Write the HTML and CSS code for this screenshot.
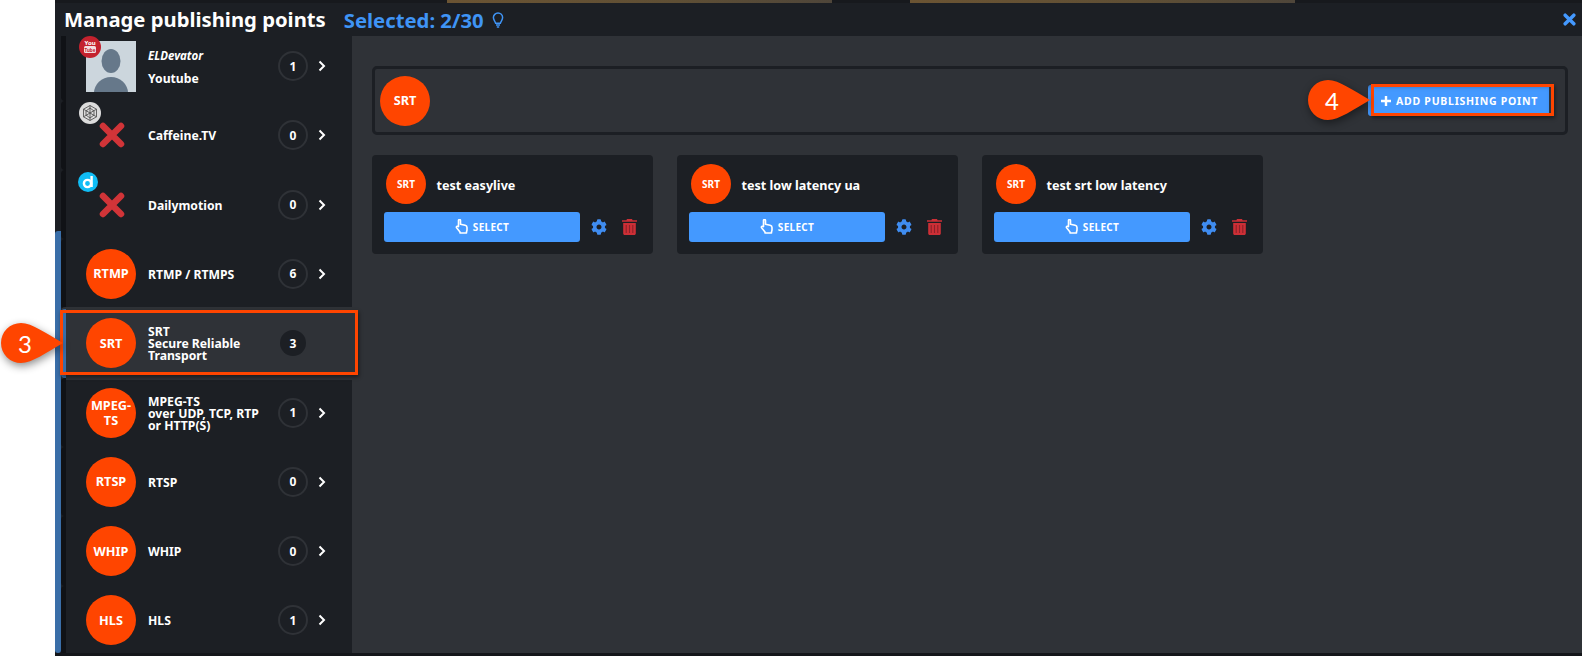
FILE: index.html
```html
<!DOCTYPE html>
<html lang="en">
<head>
<meta charset="utf-8">
<title>Manage publishing points</title>
<link rel="stylesheet" href="styles.css">
</head>
<body>
<div class="app">
  <header class="header">
    <div class="strip"><span class="strip-seg"></span><span class="strip-seg"></span></div>
    <div class="titlebar">
      <h1 class="title">Manage publishing points</h1>
      <span class="selected">Selected: 2/30</span>
      <svg class="bulb" viewBox="0 0 12 16"><path d="M6 1a4.6 4.6 0 0 0-4.6 4.6c0 2.3 1.7 3.4 2.2 5.6h4.8c.5-2.2 2.2-3.3 2.2-5.6A4.6 4.6 0 0 0 6 1z" fill="none" stroke="#3f94f5" stroke-width="1.5"/><path d="M4 13h4M4.8 15h2.4" stroke="#3f94f5" stroke-width="1.5" fill="none"/></svg>
      <svg class="close" viewBox="0 0 12 12"><path d="M2 2l8 8M10 2l-8 8" stroke="#4499ff" stroke-width="3.2" stroke-linecap="round"/></svg>
    </div>
  </header>
  <div class="body">
    <div class="rail"><div class="rail-blue"></div></div>
    <aside class="sidebar">
      <div class="list">
        <div class="row">
          <div class="icon">
            <svg class="avatar" viewBox="0 0 50 51"><rect width="50" height="51" fill="#ccd6dd"/><ellipse cx="25" cy="20" rx="9.5" ry="12" fill="#66788a"/><ellipse cx="25" cy="52" rx="17" ry="16" fill="#66788a"/></svg>
            <svg class="badge badge-yt" viewBox="0 0 22 22"><circle cx="11" cy="11" r="11" fill="#c4222e"/><text class="yt-you" x="11" y="8.5" text-anchor="middle">You</text><rect x="5" y="10" width="12" height="7" rx="1.5" fill="#f3dfe0"/><text class="yt-tube" x="11" y="15.5" text-anchor="middle">Tube</text></svg>
          </div>
          <div class="label"><div class="account">ELDevator</div><div>Youtube</div></div>
          <span class="count">1</span>
          <svg class="chev" viewBox="0 0 8 12"><path d="M1.5 1.5L6 6l-4.5 4.5" fill="none" stroke="#fff" stroke-width="2"/></svg>
        </div>
        <div class="row">
          <div class="icon">
            <svg class="badge" viewBox="0 0 22 22"><circle cx="11" cy="11" r="11" fill="#dcdcdc"/><path d="M11 3.5l6.5 3.7v7.6L11 18.5l-6.5-3.7V7.2zM11 3.5v15M4.5 7.2l13 7.6M17.5 7.2l-13 7.6M7 9l4-3 4 3 0 4-4 3-4-3z" fill="none" stroke="#444" stroke-width=".8"/></svg>
            <svg class="cross" viewBox="0 0 26 26"><path d="M4 4l18 18M22 4L4 22" stroke="#d13438" stroke-width="6.5" stroke-linecap="round"/></svg>
          </div>
          <div class="label">Caffeine.TV</div>
          <span class="count">0</span>
          <svg class="chev" viewBox="0 0 8 12"><path d="M1.5 1.5L6 6l-4.5 4.5" fill="none" stroke="#fff" stroke-width="2"/></svg>
        </div>
        <div class="row">
          <div class="icon">
            <svg class="badge badge-d" viewBox="0 0 20 20"><circle cx="10" cy="10" r="10" fill="#10bdf5"/><circle cx="9.5" cy="11.5" r="3.6" fill="none" stroke="#fff" stroke-width="2.4"/><path d="M13.6 4v11" stroke="#fff" stroke-width="2.4"/></svg>
            <svg class="cross" viewBox="0 0 26 26"><path d="M4 4l18 18M22 4L4 22" stroke="#d13438" stroke-width="6.5" stroke-linecap="round"/></svg>
          </div>
          <div class="label">Dailymotion</div>
          <span class="count">0</span>
          <svg class="chev" viewBox="0 0 8 12"><path d="M1.5 1.5L6 6l-4.5 4.5" fill="none" stroke="#fff" stroke-width="2"/></svg>
        </div>
        <div class="row">
          <div class="circle">RTMP</div>
          <div class="label">RTMP / RTMPS</div>
          <span class="count">6</span>
          <svg class="chev" viewBox="0 0 8 12"><path d="M1.5 1.5L6 6l-4.5 4.5" fill="none" stroke="#fff" stroke-width="2"/></svg>
        </div>
        <div class="row row-active">
          <div class="circle">SRT</div>
          <div class="label">SRT<br>Secure Reliable<br>Transport</div>
          <span class="count count-active">3</span>
        </div>
        <div class="row">
          <div class="circle">MPEG-TS</div>
          <div class="label">MPEG-TS<br>over UDP, TCP, RTP<br>or HTTP(S)</div>
          <span class="count">1</span>
          <svg class="chev" viewBox="0 0 8 12"><path d="M1.5 1.5L6 6l-4.5 4.5" fill="none" stroke="#fff" stroke-width="2"/></svg>
        </div>
        <div class="row">
          <div class="circle">RTSP</div>
          <div class="label">RTSP</div>
          <span class="count">0</span>
          <svg class="chev" viewBox="0 0 8 12"><path d="M1.5 1.5L6 6l-4.5 4.5" fill="none" stroke="#fff" stroke-width="2"/></svg>
        </div>
        <div class="row">
          <div class="circle">WHIP</div>
          <div class="label">WHIP</div>
          <span class="count">0</span>
          <svg class="chev" viewBox="0 0 8 12"><path d="M1.5 1.5L6 6l-4.5 4.5" fill="none" stroke="#fff" stroke-width="2"/></svg>
        </div>
        <div class="row">
          <div class="circle">HLS</div>
          <div class="label">HLS</div>
          <span class="count">1</span>
          <svg class="chev" viewBox="0 0 8 12"><path d="M1.5 1.5L6 6l-4.5 4.5" fill="none" stroke="#fff" stroke-width="2"/></svg>
        </div>
      </div>
    </aside>
    <main class="main">
      <section class="head-box">
        <div class="circle">SRT</div>
        <button class="add-btn"><svg class="plus" viewBox="0 0 10 10"><path d="M5 0v10M0 5h10" stroke="#fff" stroke-width="2.4"/></svg>ADD PUBLISHING POINT</button>
      </section>
      <section class="cards">
        <article class="card">
          <div class="card-top"><div class="circle circle-sm">SRT</div><div class="card-name">test easylive</div></div>
          <div class="card-actions">
            <button class="select-btn"><svg class="hand" viewBox="0 0 13 15"><path d="M3.5 1.6c0-1.3 2-1.3 2 0v3.6l4.6 1c1.2.3 1.9 1.2 1.9 2.4v2.2c0 .8-.2 1.4-.5 2v1.2H5v-1L1.6 8.8c-.8-1 .6-2.2 1.9-1.2z" fill="none" stroke="#fff" stroke-width="1.6" stroke-linejoin="round"/></svg>SELECT</button>
            <svg class="gear" viewBox="0 0 512 512"><path fill="#3f8cf0" d="M487.4 315.7l-42.6-24.6c4.3-23.2 4.3-47 0-70.2l42.6-24.6c4.9-2.8 7.1-8.6 5.5-14-11.1-35.6-30-67.8-54.7-94.6-3.8-4.1-10-5.1-14.8-2.3L380.8 110c-17.9-15.4-38.5-27.3-60.8-35.1V25.8c0-5.6-3.9-10.5-9.4-11.7-36.7-8.2-74.3-7.8-109.2 0-5.5 1.2-9.4 6.1-9.4 11.7V75c-22.2 7.9-42.8 19.8-60.8 35.1L88.7 85.5c-4.9-2.8-11-1.9-14.8 2.3-24.7 26.7-43.6 58.9-54.7 94.6-1.7 5.4.6 11.2 5.5 14L67.3 221c-4.3 23.2-4.3 47 0 70.2l-42.6 24.6c-4.9 2.8-7.1 8.6-5.5 14 11.1 35.6 30 67.8 54.7 94.6 3.8 4.1 10 5.1 14.8 2.3l42.6-24.6c17.9 15.4 38.5 27.3 60.8 35.1v49.2c0 5.6 3.9 10.5 9.4 11.7 36.7 8.2 74.3 7.8 109.2 0 5.5-1.2 9.4-6.1 9.4-11.7v-49.2c22.2-7.9 42.8-19.8 60.8-35.1l42.6 24.6c4.9 2.8 11 1.9 14.8-2.3 24.7-26.7 43.6-58.9 54.7-94.6 1.5-5.5-.7-11.3-5.6-14.1zM256 336c-44.1 0-80-35.9-80-80s35.9-80 80-80 80 35.9 80 80-35.9 80-80 80z"/></svg>
            <svg class="trash" viewBox="0 0 15 16"><path fill="#cc2f36" d="M5 0h5l.6 1.2H15v1.6H0V1.2h4.4zM1.2 4h12.6v10.5c0 .8-.7 1.5-1.5 1.5H2.7c-.8 0-1.5-.7-1.5-1.5z"/><path d="M4.2 6v8M7.5 6v8M10.8 6v8" stroke="#8c2229" stroke-width="1.1"/></svg>
          </div>
        </article>
        <article class="card">
          <div class="card-top"><div class="circle circle-sm">SRT</div><div class="card-name">test low latency ua</div></div>
          <div class="card-actions">
            <button class="select-btn"><svg class="hand" viewBox="0 0 13 15"><path d="M3.5 1.6c0-1.3 2-1.3 2 0v3.6l4.6 1c1.2.3 1.9 1.2 1.9 2.4v2.2c0 .8-.2 1.4-.5 2v1.2H5v-1L1.6 8.8c-.8-1 .6-2.2 1.9-1.2z" fill="none" stroke="#fff" stroke-width="1.6" stroke-linejoin="round"/></svg>SELECT</button>
            <svg class="gear" viewBox="0 0 512 512"><path fill="#3f8cf0" d="M487.4 315.7l-42.6-24.6c4.3-23.2 4.3-47 0-70.2l42.6-24.6c4.9-2.8 7.1-8.6 5.5-14-11.1-35.6-30-67.8-54.7-94.6-3.8-4.1-10-5.1-14.8-2.3L380.8 110c-17.9-15.4-38.5-27.3-60.8-35.1V25.8c0-5.6-3.9-10.5-9.4-11.7-36.7-8.2-74.3-7.8-109.2 0-5.5 1.2-9.4 6.1-9.4 11.7V75c-22.2 7.9-42.8 19.8-60.8 35.1L88.7 85.5c-4.9-2.8-11-1.9-14.8 2.3-24.7 26.7-43.6 58.9-54.7 94.6-1.7 5.4.6 11.2 5.5 14L67.3 221c-4.3 23.2-4.3 47 0 70.2l-42.6 24.6c-4.9 2.8-7.1 8.6-5.5 14 11.1 35.6 30 67.8 54.7 94.6 3.8 4.1 10 5.1 14.8 2.3l42.6-24.6c17.9 15.4 38.5 27.3 60.8 35.1v49.2c0 5.6 3.9 10.5 9.4 11.7 36.7 8.2 74.3 7.8 109.2 0 5.5-1.2 9.4-6.1 9.4-11.7v-49.2c22.2-7.9 42.8-19.8 60.8-35.1l42.6 24.6c4.9 2.8 11 1.9 14.8-2.3 24.7-26.7 43.6-58.9 54.7-94.6 1.5-5.5-.7-11.3-5.6-14.1zM256 336c-44.1 0-80-35.9-80-80s35.9-80 80-80 80 35.9 80 80-35.9 80-80 80z"/></svg>
            <svg class="trash" viewBox="0 0 15 16"><path fill="#cc2f36" d="M5 0h5l.6 1.2H15v1.6H0V1.2h4.4zM1.2 4h12.6v10.5c0 .8-.7 1.5-1.5 1.5H2.7c-.8 0-1.5-.7-1.5-1.5z"/><path d="M4.2 6v8M7.5 6v8M10.8 6v8" stroke="#8c2229" stroke-width="1.1"/></svg>
          </div>
        </article>
        <article class="card">
          <div class="card-top"><div class="circle circle-sm">SRT</div><div class="card-name">test srt low latency</div></div>
          <div class="card-actions">
            <button class="select-btn"><svg class="hand" viewBox="0 0 13 15"><path d="M3.5 1.6c0-1.3 2-1.3 2 0v3.6l4.6 1c1.2.3 1.9 1.2 1.9 2.4v2.2c0 .8-.2 1.4-.5 2v1.2H5v-1L1.6 8.8c-.8-1 .6-2.2 1.9-1.2z" fill="none" stroke="#fff" stroke-width="1.6" stroke-linejoin="round"/></svg>SELECT</button>
            <svg class="gear" viewBox="0 0 512 512"><path fill="#3f8cf0" d="M487.4 315.7l-42.6-24.6c4.3-23.2 4.3-47 0-70.2l42.6-24.6c4.9-2.8 7.1-8.6 5.5-14-11.1-35.6-30-67.8-54.7-94.6-3.8-4.1-10-5.1-14.8-2.3L380.8 110c-17.9-15.4-38.5-27.3-60.8-35.1V25.8c0-5.6-3.9-10.5-9.4-11.7-36.7-8.2-74.3-7.8-109.2 0-5.5 1.2-9.4 6.1-9.4 11.7V75c-22.2 7.9-42.8 19.8-60.8 35.1L88.7 85.5c-4.9-2.8-11-1.9-14.8 2.3-24.7 26.7-43.6 58.9-54.7 94.6-1.7 5.4.6 11.2 5.5 14L67.3 221c-4.3 23.2-4.3 47 0 70.2l-42.6 24.6c-4.9 2.8-7.1 8.6-5.5 14 11.1 35.6 30 67.8 54.7 94.6 3.8 4.1 10 5.1 14.8 2.3l42.6-24.6c17.9 15.4 38.5 27.3 60.8 35.1v49.2c0 5.6 3.9 10.5 9.4 11.7 36.7 8.2 74.3 7.8 109.2 0 5.5-1.2 9.4-6.1 9.4-11.7v-49.2c22.2-7.9 42.8-19.8 60.8-35.1l42.6 24.6c4.9 2.8 11 1.9 14.8-2.3 24.7-26.7 43.6-58.9 54.7-94.6 1.5-5.5-.7-11.3-5.6-14.1zM256 336c-44.1 0-80-35.9-80-80s35.9-80 80-80 80 35.9 80 80-35.9 80-80 80z"/></svg>
            <svg class="trash" viewBox="0 0 15 16"><path fill="#cc2f36" d="M5 0h5l.6 1.2H15v1.6H0V1.2h4.4zM1.2 4h12.6v10.5c0 .8-.7 1.5-1.5 1.5H2.7c-.8 0-1.5-.7-1.5-1.5z"/><path d="M4.2 6v8M7.5 6v8M10.8 6v8" stroke="#8c2229" stroke-width="1.1"/></svg>
          </div>
        </article>
      </section>
    </main>
  </div>
  <div class="footer"></div>
</div>

<div class="note-rect note-rect-row"></div>
<div class="note-rect note-rect-btn"></div>
<div class="balloon balloon-3">
  <svg class="balloon-shape" viewBox="0 0 64 42"><path fill="#ff4500" d="M21 1c11 0 26 11 42 20C47 30 32 41 21 41A20 20 0 0 1 21 1z"/></svg>
  <span class="balloon-num">3</span>
</div>
<div class="balloon balloon-4">
  <svg class="balloon-shape" viewBox="0 0 64 42"><path fill="#ff4500" d="M21 1c11 0 26 11 42 20C47 30 32 41 21 41A20 20 0 0 1 21 1z"/></svg>
  <span class="balloon-num">4</span>
</div>
</body>
</html>
```

FILE: styles.css
```css
* { box-sizing: border-box; }
html, body { margin: 0; padding: 0; height: 656px; overflow: hidden; background: #fff; }
body { font-family: "Noto Sans", "Open Sans", sans-serif; color: #fff; position: relative; }

.app { margin-left: 55px; height: 656px; display: flex; flex-direction: column; background: #1c1f24; }

.header { height: 36px; flex: none; background: #1c1f24; }
.strip { height: 3px; background: #17191d; display: flex; gap: 78px; padding-left: 392px; }
.strip-seg { width: 385px; background: linear-gradient(90deg, #6b5433, #5f4f35 60%, #4f463a); }
.titlebar { height: 33px; display: flex; align-items: center; padding: 0 6px 0 9px; }
.title { margin: 0; font-size: 20.25px; font-weight: 700; line-height: 33px; color: #fff; }
.selected { margin-left: 18px; font-size: 20.3px; font-weight: 700; color: #3f94f5; }
.bulb { width: 12px; height: 16px; margin-left: 8px; }
.close { width: 13px; height: 13px; margin-left: auto; }

.body { flex: 1; display: flex; min-height: 0; }
.rail { width: 6px; flex: none; padding-top: 195px; display: flex; }
.rail-blue { flex: 1; background: #3a6ea8; border-radius: 4px 0 4px 4px; }
.sidebar { width: 291px; flex: none; overflow: hidden; }
.list { margin-top: -4.6px; }

.row { height: 69.3px; display: flex; align-items: center; padding-left: 20px; border-left: 5px solid #101216; border-radius: 4px 0 0 4px; }
.row-active { background: #2f3237; border-left-color: #3a6ea8; box-shadow: 0 -2px 0 #2f3237, 0 2px 0 #2f3237; }

.icon { width: 50px; height: 50px; flex: none; position: relative; }
.avatar { width: 50px; height: 51px; display: block; }
.badge { position: absolute; left: -7px; top: -8px; width: 22px; height: 22px; }
.badge-yt { top: -5px; }
.badge-d { width: 20px; height: 20px; left: -8px; }
.cross { position: absolute; left: 13px; top: 12px; width: 26px; height: 26px; }
.yt-you { font-size: 6px; font-weight: 700; fill: #fff; }
.yt-tube { font-size: 4.5px; font-weight: 700; fill: #c4222e; }

.circle { width: 50px; height: 50px; flex: none; border-radius: 50%; background: #ff4500; color: #fff; display: flex; align-items: center; justify-content: center; text-align: center; font-size: 12.7px; font-weight: 700; line-height: 15px; padding: 0 2px; }
.circle-sm { width: 40px; height: 40px; font-size: 10px; }

.label { width: 130px; flex: none; margin-left: 12px; padding: 2px 4px 0 0; font-size: 12.2px; font-weight: 700; line-height: 12px; }
.account { font-size: 11.5px; font-style: italic; margin-bottom: 11px; }
.count { width: 30px; height: 30px; flex: none; border-radius: 50%; border: 2px solid #2f3237; display: flex; align-items: center; justify-content: center; font-size: 12px; font-weight: 700; }
.count-active { width: 26px; height: 26px; margin-left: 2px; background: #1c1f24; border: 0; }
.chev { width: 8px; height: 12px; flex: none; margin-left: 10px; }

.main { flex: 1; min-width: 0; background: #2f3237; padding: 30px 14px 0 20px; }
.head-box { height: 69px; border: 3px solid #1c1f24; border-radius: 5px; display: flex; align-items: center; justify-content: space-between; padding: 0 16px 0 5px; }
.add-btn { width: 181px; height: 31px; border: 0; padding: 0 0 0 13px; background: #4499ff; border-radius: 3px 0 0 3px; color: #fff; font-family: inherit; font-size: 10.5px; font-weight: 700; letter-spacing: .75px; display: flex; align-items: center; gap: 5px; white-space: nowrap; box-shadow: 2px 0 0 #2a3340, inset 0 4px 4px -2px rgba(0,0,0,.25); }
.plus { width: 10px; height: 10px; flex: none; }

.cards { display: flex; gap: 24px; margin-top: 20px; }
.card { width: 281px; height: 99px; background: #1c1f24; border-radius: 4px; padding: 9px 12px; }
.card-top { display: flex; align-items: center; padding-left: 2px; }
.card-name { margin-left: 10.5px; padding-top: 2px; font-size: 12.6px; font-weight: 700; }
.card-actions { display: flex; align-items: center; margin-top: 8px; }
.select-btn { width: 196px; height: 30px; border: 0; padding: 0 0 1px; background: #4499ff; border-radius: 3px; color: #fff; font-family: inherit; font-size: 10px; font-weight: 700; letter-spacing: .3px; display: flex; align-items: center; justify-content: center; gap: 5px; }
.hand { width: 13px; height: 15px; flex: none; }
.gear { width: 16px; height: 16px; margin-left: 11px; flex: none; }
.trash { width: 15px; height: 16px; margin-left: 15px; flex: none; }

.footer { height: 3px; flex: none; background: #14161a; }

.note-rect { position: absolute; border: 3px solid #ff4500; box-shadow: 1px 2px 4px rgba(0,0,0,.45); }
.note-rect-row { left: 60px; top: 310px; width: 298px; height: 65px; }
.note-rect-btn { left: 1371px; top: 84px; width: 183px; height: 32px; }

.balloon { position: absolute; width: 64px; height: 42px; display: flex; align-items: center; }
.balloon-3 { left: 0; top: 322px; }
.balloon-4 { left: 1307px; top: 79px; }
.balloon-shape { position: absolute; inset: 0; width: 64px; height: 42px; filter: drop-shadow(1px 3px 4px rgba(0,0,0,.45)); }
.balloon-num { position: relative; width: 50px; text-align: center; font-family: Lato, "Liberation Sans", sans-serif; font-size: 24px; color: #fff; }
```
